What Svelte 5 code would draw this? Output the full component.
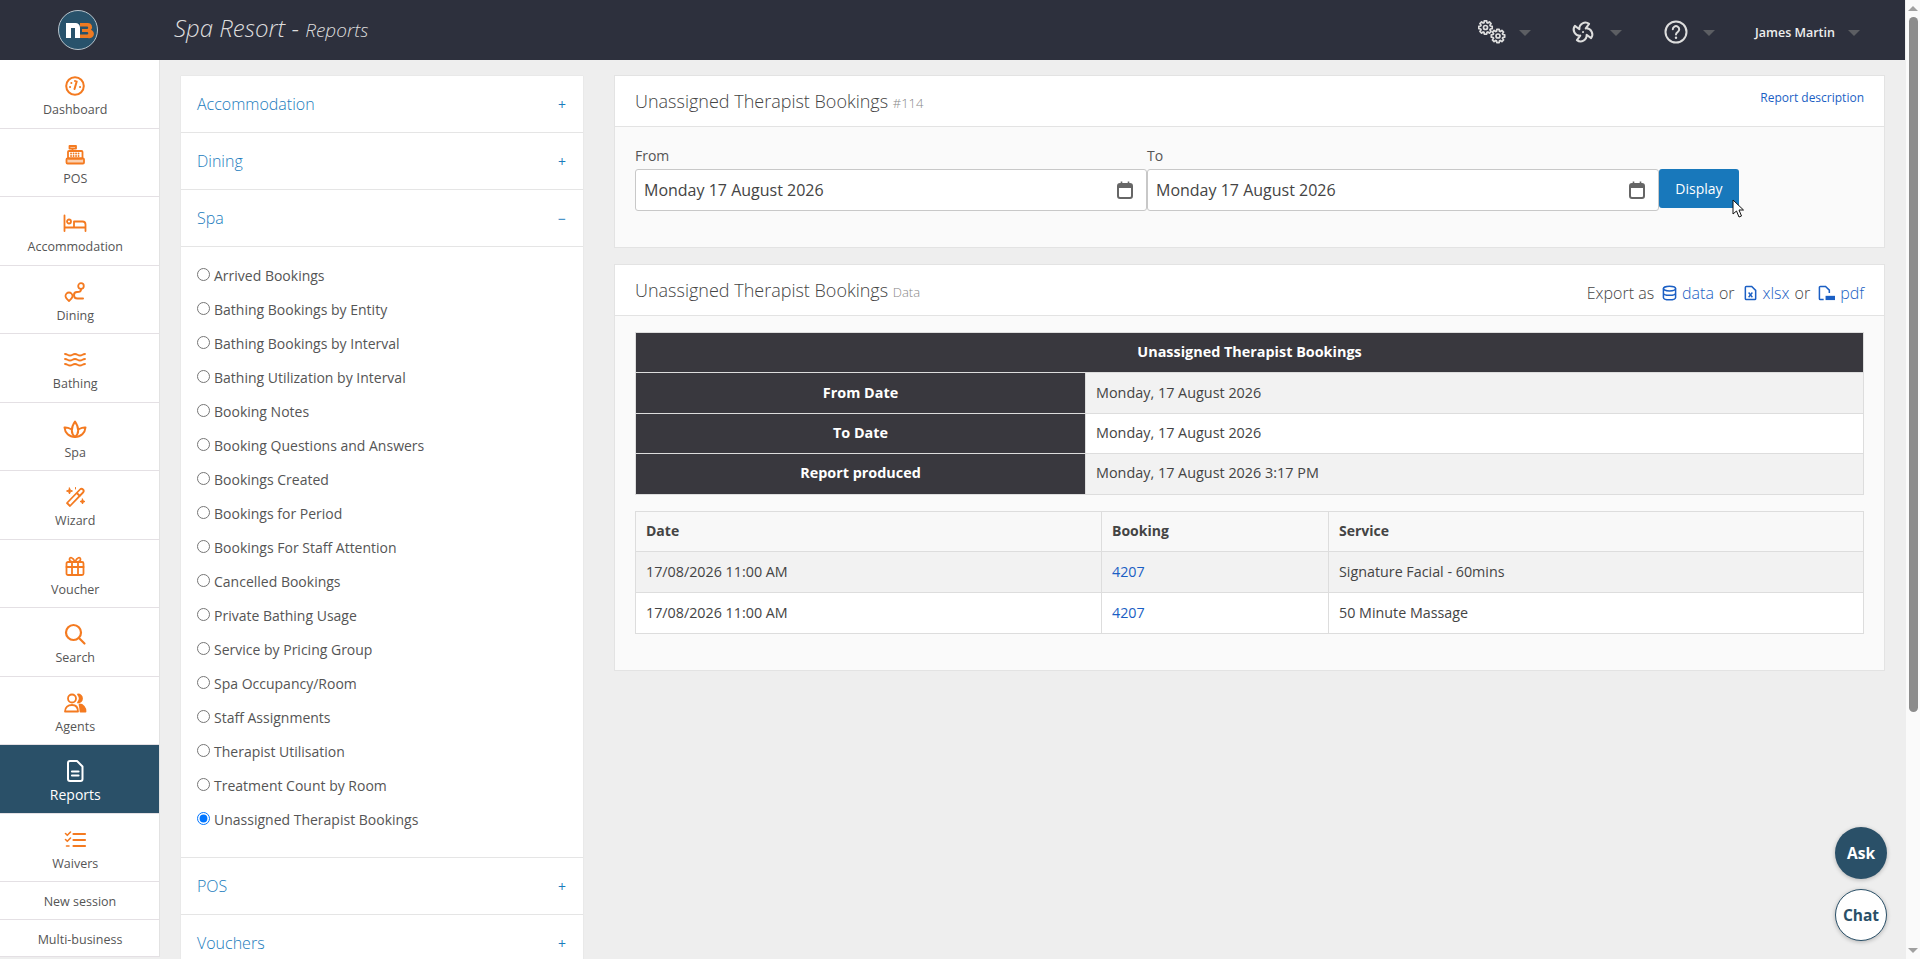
<script>
	const nav = [
		{ label: 'Dashboard', icon: 'dashboard' },
		{ label: 'POS', icon: 'pos' },
		{ label: 'Accommodation', icon: 'bed' },
		{ label: 'Dining', icon: 'route' },
		{ label: 'Bathing', icon: 'water' },
		{ label: 'Spa', icon: 'spa' },
		{ label: 'Wizard', icon: 'wand' },
		{ label: 'Voucher', icon: 'gift' },
		{ label: 'Search', icon: 'search' },
		{ label: 'Agents', icon: 'users' },
		{ label: 'Reports', icon: 'file', active: true },
		{ label: 'Waivers', icon: 'list' }
	];

	const spaReports = [
		'Arrived Bookings',
		'Bathing Bookings by Entity',
		'Bathing Bookings by Interval',
		'Bathing Utilization by Interval',
		'Booking Notes',
		'Booking Questions and Answers',
		'Bookings Created',
		'Bookings for Period',
		'Bookings For Staff Attention',
		'Cancelled Bookings',
		'Private Bathing Usage',
		'Service by Pricing Group',
		'Spa Occupancy/Room',
		'Staff Assignments',
		'Therapist Utilisation',
		'Treatment Count by Room',
		'Unassigned Therapist Bookings'
	];

	let selected = $state('Unassigned Therapist Bookings');

	const summary = [
		['From Date', 'Monday, 17 August 2026'],
		['To Date', 'Monday, 17 August 2026'],
		['Report produced', 'Monday, 17 August 2026 3:17 PM']
	];

	const rows = [
		['17/08/2026 11:00 AM', '4207', 'Signature Facial - 60mins'],
		['17/08/2026 11:00 AM', '4207', '50 Minute Massage']
	];

	// outline of a cog with square teeth
	function gear(cx, cy, outer, inner, teeth = 8) {
		const pts = [];
		const step = (Math.PI * 2) / teeth;
		for (let i = 0; i < teeth; i++) {
			const a = i * step;
			for (const [off, r] of [[-0.3, inner], [-0.17, outer], [0.17, outer], [0.3, inner]]) {
				const t = a + off * step * 1.3;
				pts.push(`${(cx + Math.cos(t) * r).toFixed(2)} ${(cy + Math.sin(t) * r).toFixed(2)}`);
			}
		}
		return 'M' + pts.join('L') + 'z';
	}
</script>

{#snippet navIcon(name)}
	<svg class="nav-icon" viewBox="0 0 24 24" fill="none" stroke="currentColor" stroke-width="1.8" stroke-linecap="round" stroke-linejoin="round">
		{#if name === 'dashboard'}
			<circle cx="12" cy="12" r="8.800" stroke-width="2" />
			<path d="M11.500 15l2.200-7.500" stroke-width="2" />
			<path d="M7 13h.1M8.300 9h.1M12 7h.1M17 13h.1" stroke-width="2" />
		{:else if name === 'pos'}
			<path d="M6.500 3h6.500v2.500H6.500zM9.500 5.500V8" />
			<rect x="5" y="8" width="14.500" height="7.500" rx="1" />
			<rect x="3.500" y="15.500" width="17.500" height="5" rx="1" fill="currentColor" fill-opacity=".35" />
			<path d="M8 10.500h.1M10.500 10.500h.1M13 10.500h.1M15.500 10.500h.1M8 13h.1M10.500 13h.1M13 13h.1M15.500 13h.1" />
		{:else if name === 'bed'}
			<path d="M1.500 4.500V20M1.500 16.500h21M22.500 20v-6.500a3 3 0 0 0-3-3H11v6" />
			<circle cx="6" cy="10.500" r="2" />
		{:else if name === 'route'}
			<circle cx="18" cy="6" r="2.800" />
			<path d="M18 9.500c0 2-2 2.500-4 2.500s-3 1-3 3 1.500 3.500 3.500 3.500H20" stroke-width="2" />
			<path d="M6 21s-3.500-3-3.500-5a3.500 3.500 0 0 1 7 0c0 2-3.500 5-3.500 5z" />
		{:else if name === 'water'}
			<path d="M2 6c2.500 0 2.500 1.500 5 1.500S9.500 6 12 6s2.500 1.500 5 1.500S19.500 6 22 6M2 11c2.500 0 2.500 1.500 5 1.500S9.500 11 12 11s2.500 1.500 5 1.500 2.500-1.500 5-1.500M2 16c2.500 0 2.500 1.500 5 1.500S9.500 16 12 16s2.500 1.500 5 1.500 2.500-1.500 5-1.500" />
		{:else if name === 'spa'}
			<g stroke-width="2">
				<path d="M12 20C8 17 7.500 11 12 4.500c4.500 6.500 4 12.500 0 15.500z" />
				<path d="M12 20C6 20 2 16 1.500 10.500c2.500-.2 4.500.5 6.300 1.500M12 20c6 0 10-4 10.500-9.500-2.500-.2-4.500.5-6.300 1.500" />
			</g>
		{:else if name === 'wand'}
			<path d="M7 21l-3-3L17 4.500a2 2 0 0 1 3 3zM13.800 8l3 3" />
			<path d="M6.500 3l.8 2.200 2.200.8-2.200.8-.8 2.200-.8-2.200L3.500 6l2.200-.8zM19.500 14l.7 1.800 1.800.7-1.800.7-.7 1.800-.7-1.800-1.800-.7 1.800-.7zM12.500 2.500v1.500" fill="currentColor" stroke-width="1" />
		{:else if name === 'gift'}
			<rect x="3.500" y="8" width="17" height="13" rx="1.500" />
			<path d="M3.500 13h17M9 8v13M15 8v13M12 8C10 3 6.500 2.500 6.500 5.500 6.500 7 8 8 12 8zm0 0c2-5 5.500-5.500 5.500-2.500C17.500 7 16 8 12 8z" />
		{:else if name === 'search'}
			<circle cx="10.500" cy="10.500" r="7.500" stroke-width="2.200" />
			<path d="M16 16l5.500 5.500" stroke-width="2.200" />
		{:else if name === 'users'}
			<circle cx="9" cy="7.500" r="4" />
			<path d="M2 20.500c0-4 3-6.500 7-6.500s6 2.500 6 6.500z" />
			<path d="M15 3.500a4 4 0 0 1 0 8 6 6 0 0 0 0-8zM16.500 13.500c3.500 0 6 3 6 7h-5c0-2.500-.5-5-1-7z" fill="currentColor" />
		{:else if name === 'file'}
			<path d="M5 4a2 2 0 0 1 2-2h7l5.500 5.500V20a2 2 0 0 1-2 2H7a2 2 0 0 1-2-2z" stroke-width="2" />
			<path d="M9 12.500h6.500M9 16.500h6.500" stroke-width="2.200" />
		{:else if name === 'list'}
			<path d="M10.500 6H22M10.500 12H22M10.500 18H22" stroke-width="2.200" />
			<path d="M2.500 5.500l1.800 1.800L7.500 4M2.500 11.500l1.800 1.800 3.200-3.300M3.500 18h2.500" stroke-width="1.600" />
		{/if}
	</svg>
{/snippet}

{#snippet calendar()}
	<svg class="cal" viewBox="0 0 16 18" fill="none" stroke="#666" stroke-width="2">
		<rect x="1" y="3" width="14" height="14" rx="2" />
		<path d="M1 5.500h14" stroke-width="3" />
		<path d="M4.500 .5v3M11.500 .5v3" stroke-width="1.600" />
	</svg>
{/snippet}

<div class="page">
	<div class="viewport">
		<header class="topbar">
			<div class="logo-wrap">
				<svg class="logo" viewBox="0 0 40 40">
					<circle cx="20" cy="20" r="19.500" fill="#28526b" stroke="#b8c4cc" stroke-width="1" />
					<path d="M8 28V13h9.500a4.500 4.500 0 0 1 4.500 4.500V28h-5V18h-4v10z" fill="#fff" />
					<path d="M22 13h8a4 4 0 0 1 3 6.700 4.200 4.200 0 0 1-3 8.300h-8v-3.400h7a1 1 0 0 0 0-2.600h-5v-3h5a1 1 0 0 0 0-2.400h-7z" fill="#ee7a22" />
				</svg>
			</div>
			<h1 class="brand">Spa Resort - <small>Reports</small></h1>
			<nav class="top-tools">
				<span class="tool">
					<svg class="tool-icon gears" viewBox="0 0 28 24" fill="none" stroke="#ddd" stroke-width="1.700" stroke-linejoin="round">
						<path d={gear(7.500, 7.500, 6.800, 5)} />
						<circle cx="7.500" cy="7.500" r="2" />
						<path d={gear(20, 16, 6.800, 5)} />
						<circle cx="20" cy="16" r="2" />
					</svg>
					<i class="caret"></i>
				</span>
				<span class="tool fan">
					<svg class="tool-icon" viewBox="0 0 24 24" fill="none" stroke="#ddd" stroke-width="2" stroke-linecap="round" stroke-linejoin="round">
						<g transform="rotate(22 12 12)">
							<path d="M10.827 16.379a6.082 6.082 0 0 1-8.618-7.002l5.412 1.45a6.082 6.082 0 0 1 7.002-8.618l-1.45 5.412a6.082 6.082 0 0 1 8.618 7.002l-5.412-1.45a6.082 6.082 0 0 1-7.002 8.618l1.45-5.412Z" />
							<path d="M12 12v.01" />
						</g>
					</svg>
					<i class="caret"></i>
				</span>
				<span class="tool help">
					<svg class="tool-icon" viewBox="0 0 24 24" fill="none" stroke="#ddd" stroke-width="2">
						<circle cx="12" cy="12" r="10.500" />
						<path d="M8.800 9.300a3.200 3.200 0 1 1 4.800 2.800c-1 .6-1.600 1.200-1.600 2.400" stroke-linecap="round" />
						<circle cx="12" cy="17.800" r="1.200" fill="#ddd" stroke="none" />
					</svg>
					<i class="caret"></i>
				</span>
				<span class="tool user">James Martin<i class="caret"></i></span>
			</nav>
		</header>

		<div class="body-row">
			<aside class="sidebar">
				{#each nav as item}
					<a class="nav-item" class:active={item.active} href="#top">
						{@render navIcon(item.icon)}
						<span>{item.label}</span>
					</a>
				{/each}
				<a class="nav-small" href="#top">New session</a>
				<a class="nav-small" href="#top">Multi-business</a>
			</aside>

			<main class="content">
				<section class="accordion">
					<div class="acc-head"><span>Accommodation</span><b>+</b></div>
					<div class="acc-head"><span>Dining</span><b>+</b></div>
					<div class="acc-head"><span>Spa</span><b>&minus;</b></div>
					<div class="acc-body">
						{#each spaReports as report}
							<label class="radio-row">
								<input type="radio" name="report" value={report} bind:group={selected} />
								<span>{report}</span>
							</label>
						{/each}
					</div>
					<div class="acc-head"><span>POS</span><b>+</b></div>
					<div class="acc-head"><span>Vouchers</span><b>+</b></div>
				</section>

				<div class="reports">
					<section class="panel">
						<div class="panel-head">
							<h2>Unassigned Therapist Bookings <small>#114</small></h2>
							<a class="desc" href="#top">Report description</a>
						</div>
						<div class="panel-body filter">
							<div class="field">
								<label for="from">From</label>
								<div class="date-input">
									<input id="from" value="Monday 17 August 2026" readonly />
									{@render calendar()}
								</div>
							</div>
							<div class="field">
								<label for="to">To</label>
								<div class="date-input">
									<input id="to" value="Monday 17 August 2026" readonly />
									{@render calendar()}
								</div>
							</div>
							<button class="display">Display</button>
						</div>
					</section>

					<section class="panel">
						<div class="panel-head">
							<h2>Unassigned Therapist Bookings <small>Data</small></h2>
							<div class="export">
								Export as
								<svg class="exp-icon" viewBox="0 0 16 16" fill="none" stroke="#1b5fc4" stroke-width="1.600">
									<ellipse cx="8" cy="3.300" rx="6.500" ry="2.500" />
									<path d="M1.500 3.300v9.400c0 1.400 2.900 2.500 6.500 2.500s6.500-1.100 6.500-2.500V3.300M1.500 8c0 1.400 2.900 2.500 6.500 2.500s6.500-1.100 6.500-2.500" />
								</svg>
								<a href="#top">data</a> or
								<svg class="exp-icon" viewBox="0 0 16 16" fill="none" stroke="#1b5fc4" stroke-width="1.600">
									<path d="M2.500 2a1 1 0 0 1 1-1h5.800l4.200 4.200V14a1 1 0 0 1-1 1h-9a1 1 0 0 1-1-1z" />
									<path d="M6 7.500l4 5M10 7.500l-4 5" stroke-width="1.500" />
								</svg>
								<a href="#top">xlsx</a> or
								<svg class="exp-icon pdf" viewBox="0 0 18 16" fill="none" stroke="#1b5fc4" stroke-width="1.600">
									<path d="M6 15H2.500a1 1 0 0 1-1-1V2a1 1 0 0 1 1-1h5.500l4 4v3" />
									<path d="M8 11h10v4.500H8z" fill="#1b5fc4" stroke="none" />
								</svg>
								<a href="#top">pdf</a>
							</div>
						</div>
						<div class="panel-body data">
							<table class="summary">
								<colgroup>
									<col class="summary-name" />
									<col />
								</colgroup>
								<thead>
									<tr><th colspan="2">Unassigned Therapist Bookings</th></tr>
								</thead>
								<tbody>
									{#each summary as [name, value]}
										<tr><th>{name}</th><td>{value}</td></tr>
									{/each}
								</tbody>
							</table>
							<table class="results">
								<thead>
									<tr><th>Date</th><th>Booking</th><th>Service</th></tr>
								</thead>
								<tbody>
									{#each rows as [date, booking, service]}
										<tr><td>{date}</td><td><a href="#top">{booking}</a></td><td>{service}</td></tr>
									{/each}
								</tbody>
							</table>
						</div>
					</section>
				</div>
			</main>
		</div>

		<button class="float ask">Ask</button>
		<button class="float chat">Chat</button>
		<svg class="cursor" viewBox="0 0 12 20">
			<path d="M1 1v14l3.500-3 2.500 6 2.500-1-2.500-6h4.500z" fill="#fff" stroke="#111" stroke-width="1" />
		</svg>
	</div>

	<div class="scrollbar">
		<i class="arrow up"></i>
		<div class="track"><div class="thumb"></div></div>
		<i class="arrow down"></i>
	</div>
</div>

<style>
	:global(body) {
		margin: 0;
		overflow: hidden;
		background: #eee;
		font-family: 'Open Sans', sans-serif;
		color: #555;
	}

	.page {
		display: flex;
		height: 959px;
		overflow: hidden;
	}

	.viewport {
		position: relative;
		flex: 1;
		min-width: 0;
		overflow: hidden;
	}

	.topbar {
		display: flex;
		align-items: center;
		height: 60px;
		background: #2d303d;
		color: #ddd;
	}

	.logo-wrap {
		width: 156px;
		display: flex;
		justify-content: center;
	}

	.logo {
		width: 40px;
		height: 40px;
	}

	.brand {
		margin: 0 0 5px 18px;
		font-size: 24px;
		font-weight: 300;
		font-style: italic;
		color: #ddd;
	}

	.brand small {
		font-size: 19px;
	}

	.top-tools {
		margin: 4px 45px 0 auto;
		display: flex;
		align-items: center;
	}

	.tool {
		display: flex;
		align-items: center;
		margin-left: 41px;
	}

	.fan {
		margin-left: 40px;
	}

	.help {
		margin-left: 42px;
	}

	.tool-icon {
		width: 24px;
		height: 24px;
	}

	.gears {
		width: 28px;
		margin-right: -2px;
	}

	.user {
		font-size: 12.500px;
		font-weight: 600;
		color: #eee;
		margin-left: 40px;
	}

	.caret {
		display: inline-block;
		margin-left: 15px;
		border-left: 6px solid transparent;
		border-right: 6px solid transparent;
		border-top: 6px solid #5c5e63;
		margin-top: 2px;
	}

	.user .caret {
		margin-left: 13px;
	}

	.body-row {
		display: flex;
		align-items: flex-start;
	}

	.sidebar {
		width: 159px;
		flex: none;
		background: #fff;
		border-right: 1px solid #e2e2e2;
	}

	.nav-item {
		display: flex;
		flex-direction: column;
		align-items: center;
		justify-content: flex-end;
		box-sizing: border-box;
		height: 68.500px;
		padding: 0 8.500px 9.500px 0;
		border-bottom: 1px solid #e4e0e4;
		color: #f47a20;
		text-decoration: none;
	}

	.nav-item span {
		margin-top: 3px;
		font-size: 12.500px;
		line-height: 17px;
		color: #555;
	}

	.nav-item.active {
		background: #2a5068;
		color: #fff;
	}

	.nav-item.active span {
		color: #fff;
		font-size: 14px;
	}

	.nav-icon {
		width: 24px;
		height: 24px;
	}

	.nav-small {
		display: block;
		height: 36.500px;
		padding-left: 1px;
		line-height: 39px;
		text-align: center;
		font-size: 12.500px;
		color: #555;
		text-decoration: none;
		border-bottom: 1px solid #e4e0e4;
	}

	.content {
		flex: 1;
		min-width: 0;
		display: flex;
		align-items: flex-start;
		gap: 31px;
		padding: 16px 20px 0 21px;
	}

	.accordion {
		width: 402px;
		flex: none;
		background: #fff;
		box-shadow: 0 0 1px #ccc;
	}

	.acc-head {
		display: flex;
		align-items: center;
		justify-content: space-between;
		box-sizing: border-box;
		height: 57px;
		padding: 0 17px 0 16px;
		border-bottom: 1px solid #e5e5e5;
		color: #1b7cbd;
		font-size: 16px;
		font-weight: 300;
	}

	.acc-head b {
		font-weight: 400;
		font-size: 14px;
	}

	.acc-body {
		padding: 11px 16px 21px;
		border-bottom: 1px solid #e5e5e5;
	}

	.radio-row {
		display: flex;
		align-items: center;
		height: 34px;
		font-size: 14px;
		color: #555;
	}

	.radio-row input {
		margin: 0 4px 1px 0;
		width: 13px;
		height: 13px;
	}

	.reports {
		flex: 1;
		min-width: 0;
		display: flex;
		flex-direction: column;
		gap: 16px;
		margin-top: -1px;
	}

	.panel {
		background: #fafafa;
		border: 1px solid #e3e3e3;
	}

	.panel-head {
		display: flex;
		justify-content: space-between;
		align-items: center;
		box-sizing: border-box;
		height: 51px;
		padding: 0 20px 1px;
		background: #fff;
		border-bottom: 1px solid #e3e3e3;
	}

	.panel-head h2 {
		margin: 0;
		font-size: 18px;
		font-weight: 300;
		color: #444;
	}

	.panel-head small {
		font-size: 13px;
		color: #888;
	}

	.desc {
		align-self: flex-start;
		margin-top: 13px;
		font-size: 12px;
		color: #1b5fc4;
		text-decoration: none;
	}

	.filter {
		display: flex;
		align-items: flex-start;
		padding: 19px 20px 36px;
	}

	.field {
		width: 512px;
	}

	.field label {
		display: block;
		font-size: 14px;
		line-height: 20px;
		margin-bottom: 3px;
	}

	.date-input {
		position: relative;
	}

	.date-input input {
		display: block;
		box-sizing: border-box;
		width: 100%;
		height: 42px;
		padding: 0 40px 0 8px;
		border: 1px solid #c8c8c8;
		border-radius: 3px;
		background: #fff;
		font: 16px 'Open Sans', sans-serif;
		color: #444;
		outline: none;
	}

	.cal {
		position: absolute;
		right: 14px;
		top: 12px;
		width: 16px;
		height: 18px;
	}

	.display {
		align-self: flex-start;
		margin-top: 23px;
		width: 80px;
		height: 39px;
		border: none;
		border-radius: 3px;
		background: #1878bb;
		color: #fff;
		font: 14px 'Open Sans', sans-serif;
	}

	.export {
		display: flex;
		align-items: center;
		gap: 5px;
		font-size: 16px;
		font-weight: 300;
		color: #444;
		margin-top: 7px;
	}

	.export a {
		color: #1b5fc4;
		text-decoration: none;
	}

	.exp-icon {
		width: 15px;
		height: 16px;
		margin-left: 3px;
	}

	.exp-icon.pdf {
		width: 17px;
	}

	.data {
		padding: 16px 20px 36px;
	}

	table {
		width: 100%;
		border-collapse: collapse;
		font-size: 14.300px;
		background: #fff;
		table-layout: fixed;
	}

	.summary {
		margin-bottom: 16px;
		font-size: 14.400px;
	}

	.summary-name {
		width: 450px;
	}

	.summary th {
		height: 37.400px;
		padding: 0 0 2px;
		background: #39383e;
		color: #fff;
		font-weight: 700;
		border: 1px solid #ddd;
	}

	.summary td {
		padding: 0 10px 2px;
		border: 1px solid #ddd;
		color: #444;
	}

	.summary tbody tr:nth-child(odd) td {
		background: #f2f2f2;
	}

	.results th {
		height: 37.800px;
		padding: 0 10px 2px;
		text-align: left;
		font-weight: 700;
		font-size: 14px;
		background: #f8f8f8;
		color: #444;
		border: 1px solid #ddd;
	}

	.results th:first-child {
		width: 445px;
	}

	.results th:nth-child(2) {
		width: 206px;
	}

	.results td {
		height: 37.800px;
		padding: 0 10px 2px;
		border: 1px solid #ddd;
		color: #444;
	}

	.results tbody tr:nth-child(odd) td {
		background: #f2f2f2;
	}

	.results a {
		color: #1b5fc4;
		text-decoration: none;
	}

	.float {
		position: absolute;
		right: 18px;
		width: 52px;
		height: 52px;
		padding: 0;
		border-radius: 50%;
		font: 700 15.500px 'Open Sans', sans-serif;
		box-shadow: 0 1px 4px rgba(0, 0, 0, 0.25);
	}

	.ask {
		top: 827px;
		border: none;
		background: #2a5068;
		color: #fff;
	}

	.chat {
		top: 889px;
		border: 1px solid #2a5068;
		background: #fff;
		color: #2a5068;
	}

	.cursor {
		position: absolute;
		left: 1732px;
		top: 199px;
		width: 12px;
		height: 20px;
	}

	.scrollbar {
		width: 15px;
		flex: none;
		display: flex;
		flex-direction: column;
		align-items: center;
		background: #fafafa;
		border-left: 1px solid #eee;
		box-sizing: border-box;
	}

	.arrow {
		flex: none;
		margin: 6px 0;
		border-left: 5px solid transparent;
		border-right: 5px solid transparent;
	}

	.arrow.up {
		border-bottom: 5px solid #a0a0a0;
	}

	.arrow.down {
		border-top: 5px solid #a0a0a0;
	}

	.track {
		flex: 1;
		width: 100%;
		display: flex;
		justify-content: center;
	}

	.thumb {
		width: 9px;
		height: 695px;
		border-radius: 5px;
		background: #8c8c8c;
	}
</style>
